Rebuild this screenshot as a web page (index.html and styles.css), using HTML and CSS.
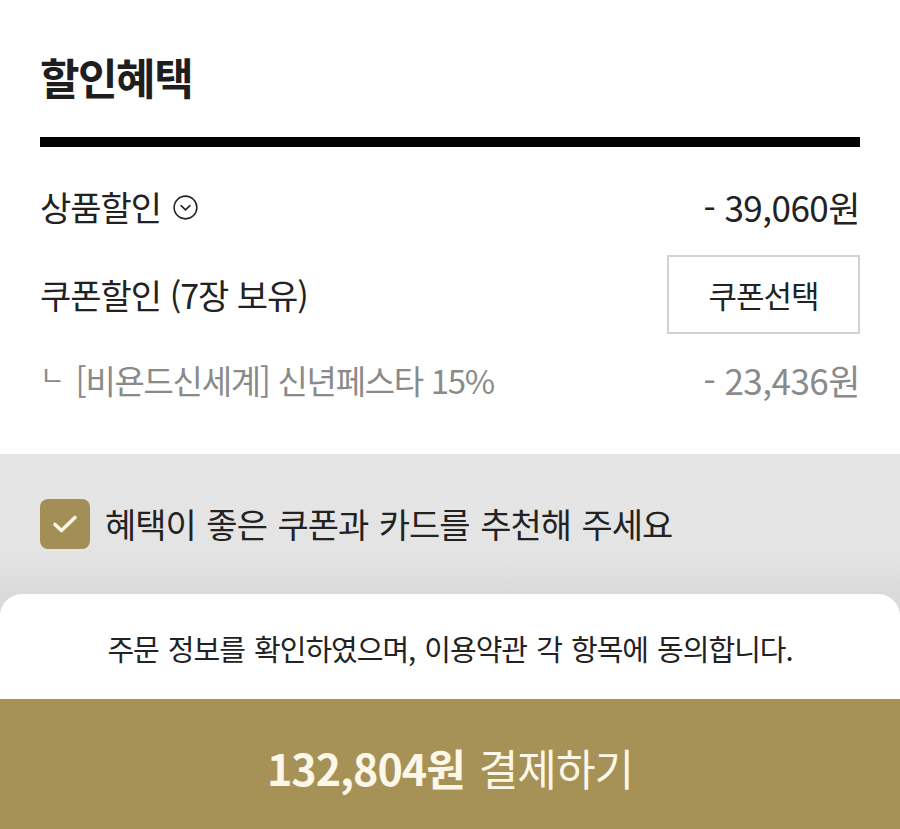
FILE: index.html
```html
<!DOCTYPE html>
<html lang="ko">
<head>
<meta charset="utf-8">
<link rel="stylesheet" href="styles.css">
</head>
<body>
<div class="page">
  <section class="benefit">
    <h2 class="title">할인혜택</h2>
    <div class="rule"></div>
    <div class="rows">
      <div class="row row-product">
        <div class="label">상품할인
          <svg class="chev" width="25" height="25" viewBox="0 0 24 24">
            <circle cx="12" cy="12" r="10.9" fill="none" stroke="#222" stroke-width="1.5"/>
            <path d="M7.8 10.2 L12 14.3 L16.2 10.2" fill="none" stroke="#222" stroke-width="1.5" stroke-linecap="round" stroke-linejoin="round"/>
          </svg>
        </div>
        <div class="amount">- 39,060원</div>
      </div>
      <div class="row row-coupon">
        <div class="label">쿠폰할인 (7장 보유)</div>
        <button class="coupon-btn">쿠폰선택</button>
      </div>
      <div class="row row-sub">
        <div class="label sub sub-label"><span class="nieun">ㄴ</span>[비욘드신세계] 신년페스타 15%</div>
        <div class="amount sub">- 23,436원</div>
      </div>
    </div>
  </section>
  <div class="lower">
    <section class="recommend">
      <span class="checkbox">
        <svg width="26" height="20" viewBox="0 0 26 20">
          <path d="M3 10.5 L9.5 16.5 L23 3.5" fill="none" stroke="#fbf6e6" stroke-width="3.6" stroke-linecap="round" stroke-linejoin="round"/>
        </svg>
      </span>
      <span class="rec-text">혜택이 좋은 쿠폰과 카드를 추천해 주세요</span>
    </section>
    <footer class="sheet">
      <p class="agree">주문 정보를 확인하였으며, 이용약관 각 항목에 동의합니다.</p>
      <div class="pay"><strong class="price">132,804원</strong><span class="pay-label">결제하기</span></div>
    </footer>
  </div>
</div>
</body>
</html>
```

FILE: styles.css
```css
* { box-sizing: border-box; }
html, body { margin: 0; padding: 0; background: #fff; }
body {
  font-family: "Noto Sans CJK KR", "Noto Sans", sans-serif;
  color: #222;
  width: 900px;
  height: 829px;
  overflow: hidden;
}
.page { display: flex; flex-direction: column; }

.benefit { padding: 0 40px; }
.title {
  margin: 0;
  padding-top: 50px;
  height: 137px;
  font-size: 43px;
  font-weight: 700;
  letter-spacing: -1.5px;
  line-height: 52px;
  color: #1e1e1e;
}
.rule { height: 10px; background: #000; }

.rows {
  display: flex;
  flex-direction: column;
  gap: 18px;
  padding: 30px 0 49px;
}
.row {
  display: flex;
  align-items: center;
  justify-content: space-between;
}
.row-product { height: 60px; }
.row-coupon { height: 79px; }
.row-sub { height: 50px; margin-top: 3px; }

.label {
  display: flex;
  align-items: center;
  gap: 12px;
  font-size: 34px;
  letter-spacing: -1px;
  line-height: 42px;
}
.row-coupon .label, .row-sub .label { gap: 0; white-space: pre; }
.sub-label { font-size: 33px; letter-spacing: -1.3px; }
.nieun { font-size: 27px; margin-right: 12px; margin-top: -10px; }
.amount {
  font-size: 35px;
  letter-spacing: -0.5px;
  line-height: 42px;
}
.sub { color: #8a8a8a; }
.chev { display: block; }

.coupon-btn {
  width: 193px;
  height: 79px;
  border: 2px solid #d2d2d2;
  background: #fff;
  font-family: inherit;
  font-size: 31px;
  letter-spacing: -1px;
  color: #222;
  padding: 0;
}

.lower { background: #dadada; }
.recommend {
  height: 140px;
  background: linear-gradient(#e5e5e5 0%, #e4e4e4 72%, #dadada 100%);
  display: flex;
  align-items: center;
  gap: 15px;
  padding: 0 40px;
}
.checkbox {
  width: 50px;
  height: 50px;
  border-radius: 8px;
  background: #a38f55;
  display: flex;
  align-items: center;
  justify-content: center;
}
.rec-text {
  font-size: 34px;
  letter-spacing: -1px;
  word-spacing: 2px;
  line-height: 42px;
  color: #222;
}

.sheet {
  background: #fff;
  border-radius: 22px 22px 0 0;
  overflow: hidden;
}
.agree {
  margin: 0;
  height: 105px;
  display: flex;
  align-items: center;
  justify-content: center;
  padding-top: 2px;
  font-size: 29px;
  letter-spacing: -1px;
  word-spacing: 2px;
  color: #222;
}
.pay {
  height: 130px;
  background: #a69256;
  display: flex;
  align-items: center;
  justify-content: center;
  gap: 14px;
  color: #fcf7e8;
  font-size: 43px;
  letter-spacing: -1px;
  padding-top: 6px;
}
.price { font-weight: 700; }
.pay-label { font-weight: 400; }
```
